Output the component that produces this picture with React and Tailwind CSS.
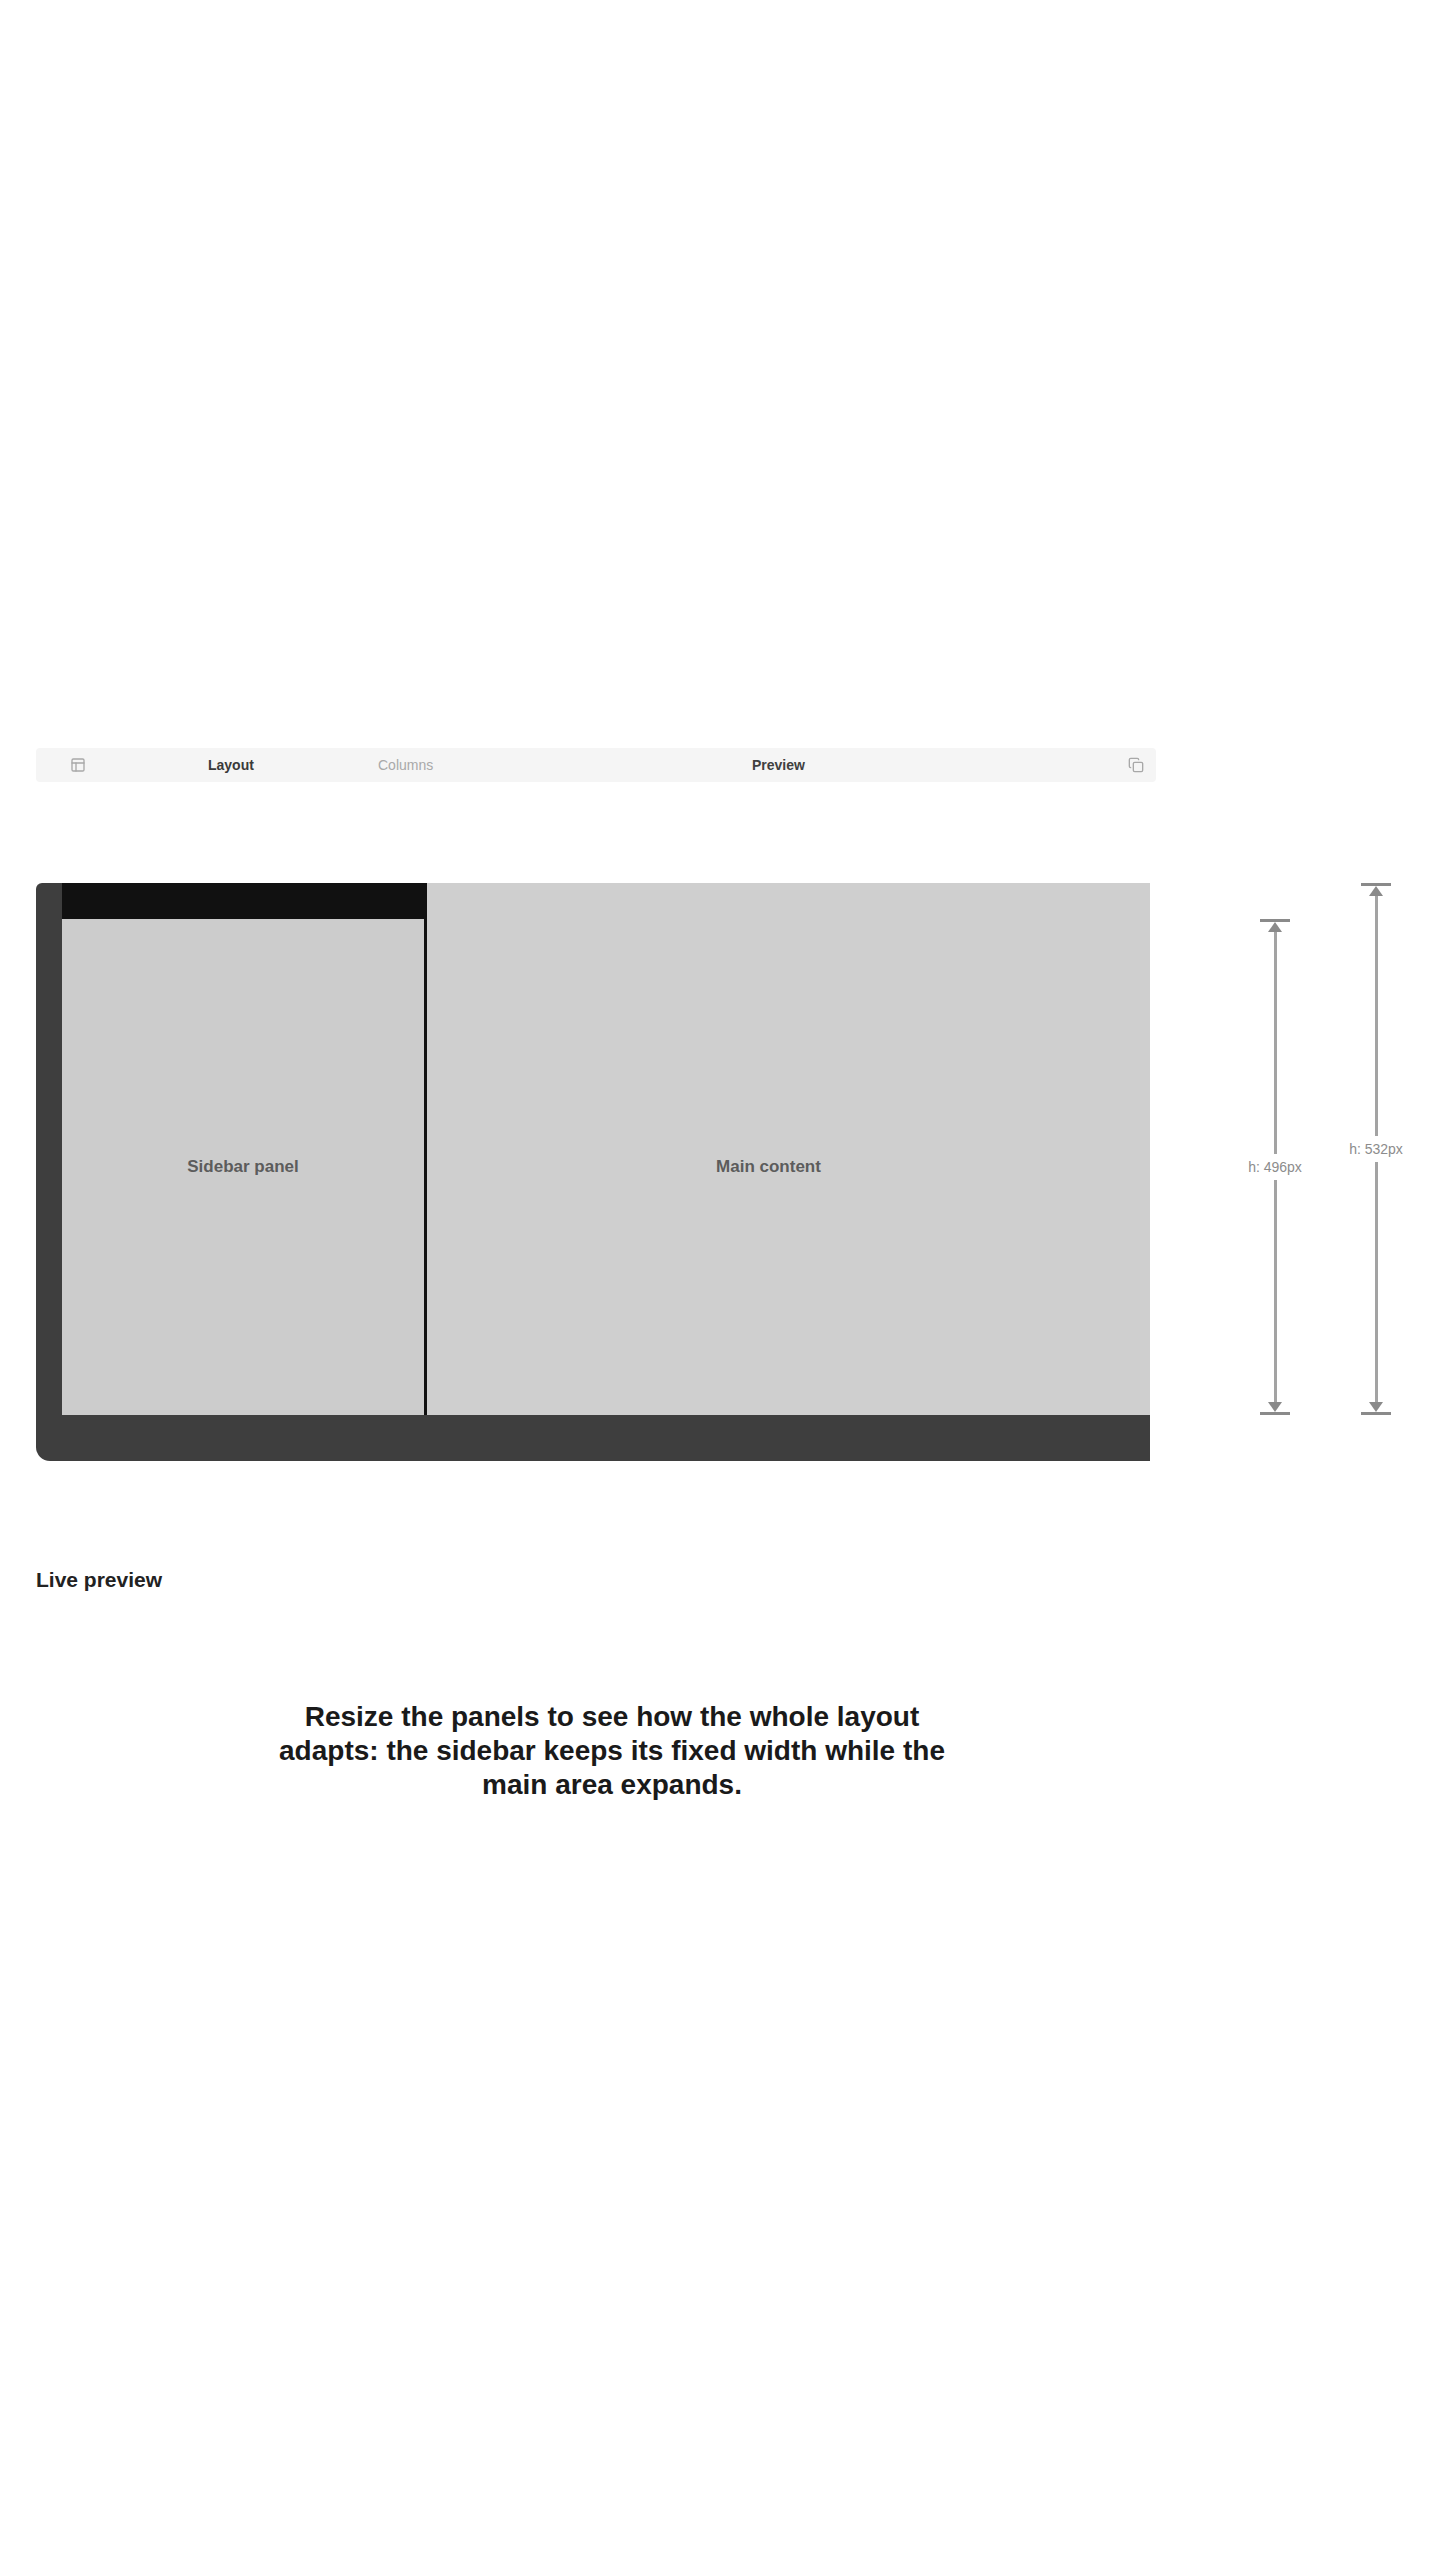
import React from "react";
import { PanelsTopLeft, Copy } from "lucide-react";

function Dim({ wrapClass, label }) {
  return (
    <div className={wrapClass}>
      <div className="h-[3px] w-[30px] bg-[#8a8a8a]" />
      <svg width="14" height="10" viewBox="0 0 14 10" className="block">
        <path d="M7 0 L14 10 L0 10 Z" fill="#8a8a8a" />
      </svg>
      <div className="w-[3px] flex-1 bg-[#a3a3a3]" />
      <svg width="14" height="10" viewBox="0 0 14 10" className="block">
        <path d="M0 0 L14 0 L7 10 Z" fill="#8a8a8a" />
      </svg>
      <div className="h-[3px] w-[30px] bg-[#8a8a8a]" />
      <span className="absolute left-1/2 top-1/2 -translate-x-1/2 -translate-y-1/2 whitespace-nowrap bg-white px-2 py-1 text-[14px] leading-[18px] text-[#8c8c8c]">
        {label}
      </span>
    </div>
  );
}

export default function App() {
  return (
    <div className="min-h-[2560px] bg-white font-['Liberation_Sans',Arial,sans-serif] text-[#1f1f1f]">
      <div className="pl-[36px] pt-[748px]">
        {/* toolbar */}
        <div className="flex h-[34px] w-[1120px] items-center rounded-[4px] bg-[#f5f5f5] text-[14px]">
          <span className="flex w-[172px] items-center pl-[34px] text-[#a8a8a8]">
            <PanelsTopLeft size={16} strokeWidth={2} />
          </span>
          <span className="w-[170px] font-semibold text-[#3a3a3a]">Layout</span>
          <span className="w-[374px] text-[#a9a9a9]">Columns</span>
          <span className="flex-1 font-semibold text-[#404040]">Preview</span>
          <span className="flex items-center pr-[12px] text-[#a8a8a8]">
            <Copy size={16} strokeWidth={2} />
          </span>
        </div>

        {/* diagram row */}
        <div className="mt-[101px] flex items-start">
          <div className="flex h-[578px] w-[1114px] flex-col overflow-hidden rounded-bl-[14px] rounded-tl-[6px]">
            <div className="flex flex-1">
              <div className="w-[26px] bg-[#3e3e3e]" />
              <div className="flex w-[362px] flex-col bg-[#cccccc]">
                <div className="h-[36px] bg-[#111111]" />
                <div className="flex flex-1 items-center justify-center">
                  <span className="text-[17px] font-semibold text-[#5c5c5c]">Sidebar panel</span>
                </div>
              </div>
              <div className="w-[3px] bg-[#111111]" />
              <div className="flex flex-1 items-center justify-center bg-[#cfcfcf] pr-[40px] pt-[36px]">
                <span className="text-[17px] font-semibold text-[#5c5c5c]">Main content</span>
              </div>
            </div>
            <div className="h-[46px] bg-[#3e3e3e]" />
          </div>

          <div className="ml-[110px] flex items-start gap-[71px]">
            <Dim
              wrapClass="relative mt-[36px] flex h-[496px] w-[30px] flex-col items-center"
              label="h: 496px"
            />
            <Dim
              wrapClass="relative flex h-[532px] w-[30px] flex-col items-center"
              label="h: 532px"
            />
          </div>
        </div>

        {/* label */}
        <div className="mt-[105px] text-[21px] font-bold leading-[28px] text-[#222]">Live preview</div>

        {/* caption */}
        <p className="ml-[216px] mt-[106px] w-[720px] text-center text-[28px] font-bold leading-[34px] text-[#1a1a1a]">
          Resize the panels to see how the whole layout
          <br />
          adapts: the sidebar keeps its fixed width while the
          <br />
          main area expands.
        </p>
      </div>
    </div>
  );
}
